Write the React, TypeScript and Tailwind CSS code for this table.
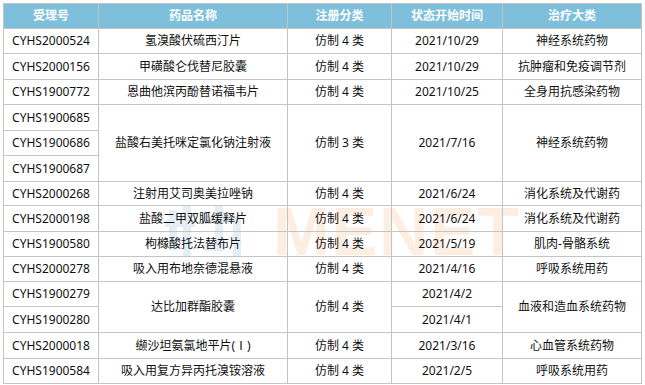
import React from "react";

type Row = {
  id: string;
  name?: string;
  nameSpan?: number;
  cat?: string;
  catSpan?: number;
  date?: string;
  dateSpan?: number;
  cls?: string;
  clsSpan?: number;
  h: string;
};

const rows: Row[] = [
  { id: "CYHS2000524", name: "氢溴酸伏硫西汀片", cat: "仿制 4 类", date: "2021/10/29", cls: "神经系统药物", h: "h-[25px]" },
  { id: "CYHS2000156", name: "甲磺酸仑伐替尼胶囊", cat: "仿制 4 类", date: "2021/10/29", cls: "抗肿瘤和免疫调节剂", h: "h-[26px]" },
  { id: "CYHS1900772", name: "恩曲他滨丙酚替诺福韦片", cat: "仿制 4 类", date: "2021/10/25", cls: "全身用抗感染药物", h: "h-[25px]" },
  { id: "CYHS1900685", name: "盐酸右美托咪定氯化钠注射液", nameSpan: 3, cat: "仿制 3 类", catSpan: 3, date: "2021/7/16", dateSpan: 3, cls: "神经系统药物", clsSpan: 3, h: "h-[26px]" },
  { id: "CYHS1900686", h: "h-[25px]" },
  { id: "CYHS1900687", h: "h-[26px]" },
  { id: "CYHS2000268", name: "注射用艾司奥美拉唑钠", cat: "仿制 4 类", date: "2021/6/24", cls: "消化系统及代谢药", h: "h-[24px]" },
  { id: "CYHS2000198", name: "盐酸二甲双胍缓释片", cat: "仿制 4 类", date: "2021/6/24", cls: "消化系统及代谢药", h: "h-[26px]" },
  { id: "CYHS1900580", name: "枸橼酸托法替布片", cat: "仿制 4 类", date: "2021/5/19", cls: "肌肉-骨骼系统", h: "h-[25px]" },
  { id: "CYHS2000278", name: "吸入用布地奈德混悬液", cat: "仿制 4 类", date: "2021/4/16", cls: "呼吸系统用药", h: "h-[25px]" },
  { id: "CYHS1900279", name: "达比加群酯胶囊", nameSpan: 2, cat: "仿制 4 类", catSpan: 2, date: "2021/4/2", cls: "血液和造血系统药物", clsSpan: 2, h: "h-[25px]" },
  { id: "CYHS1900280", date: "2021/4/1", h: "h-[26px]" },
  { id: "CYHS2000018", name: "缬沙坦氨氯地平片(Ⅰ)", cat: "仿制 4 类", date: "2021/3/16", cls: "心血管系统药物", h: "h-[26px]" },
  { id: "CYHS1900584", name: "吸入用复方异丙托溴铵溶液", cat: "仿制 4 类", date: "2021/2/5", cls: "呼吸系统用药", h: "h-[25px]" },
];

const td = "border border-[#c4c4c4] p-0 text-center align-middle";

export default function App() {
  return (
    <div
      className="relative w-[645px] h-[385px] bg-white overflow-hidden"
      style={{ fontFamily: '"Noto Sans", "Noto Sans CJK SC", sans-serif' }}
    >
      {/* watermark (behind the table) */}
      <div className="pointer-events-none absolute left-[165px] top-[204px] flex items-end gap-[28px]">
        <svg width="80" height="54" viewBox="0 0 80 54">
          <g fill="#e4eef4">
            <rect x="4" y="6" width="8" height="40" />
            <rect x="0" y="16" width="30" height="7" />
            <rect x="18" y="2" width="8" height="50" />
            <rect x="36" y="12" width="40" height="7" />
            <rect x="50" y="2" width="8" height="40" />
            <rect x="68" y="12" width="8" height="40" />
            <rect x="38" y="40" width="22" height="7" />
          </g>
        </svg>
        <div
          className="text-[68px] font-black leading-[54px] tracking-[2px] text-[#fdeee2]"
          style={{ fontFamily: '"Liberation Sans", sans-serif' }}
        >
          MENET
        </div>
      </div>

      <div className="relative pl-[3px] pt-[3px]">
        <table className="border-collapse table-fixed w-[638px] text-[12px] text-[#111] leading-none">
          <colgroup>
            <col className="w-[95px]" />
            <col className="w-[189px]" />
            <col className="w-[104px]" />
            <col className="w-[111px]" />
            <col className="w-[139px]" />
          </colgroup>
          <thead>
            <tr className="h-[25px] bg-[#7ebfdc] text-white font-bold">
              <th className={td}>受理号</th>
              <th className={td}>药品名称</th>
              <th className={td}>注册分类</th>
              <th className={td}>状态开始时间</th>
              <th className={td}>治疗大类</th>
            </tr>
          </thead>
          <tbody>
            {rows.map((r) => (
              <tr key={r.id} className={r.h}>
                <td className={td}>{r.id}</td>
                {r.name && (
                  <td className={td} rowSpan={r.nameSpan}>
                    {r.name}
                  </td>
                )}
                {r.cat && (
                  <td className={td} rowSpan={r.catSpan}>
                    {r.cat}
                  </td>
                )}
                {r.date && (
                  <td className={td} rowSpan={r.dateSpan}>
                    {r.date}
                  </td>
                )}
                {r.cls && (
                  <td className={td} rowSpan={r.clsSpan}>
                    {r.cls}
                  </td>
                )}
              </tr>
            ))}
          </tbody>
        </table>
      </div>
    </div>
  );
}
